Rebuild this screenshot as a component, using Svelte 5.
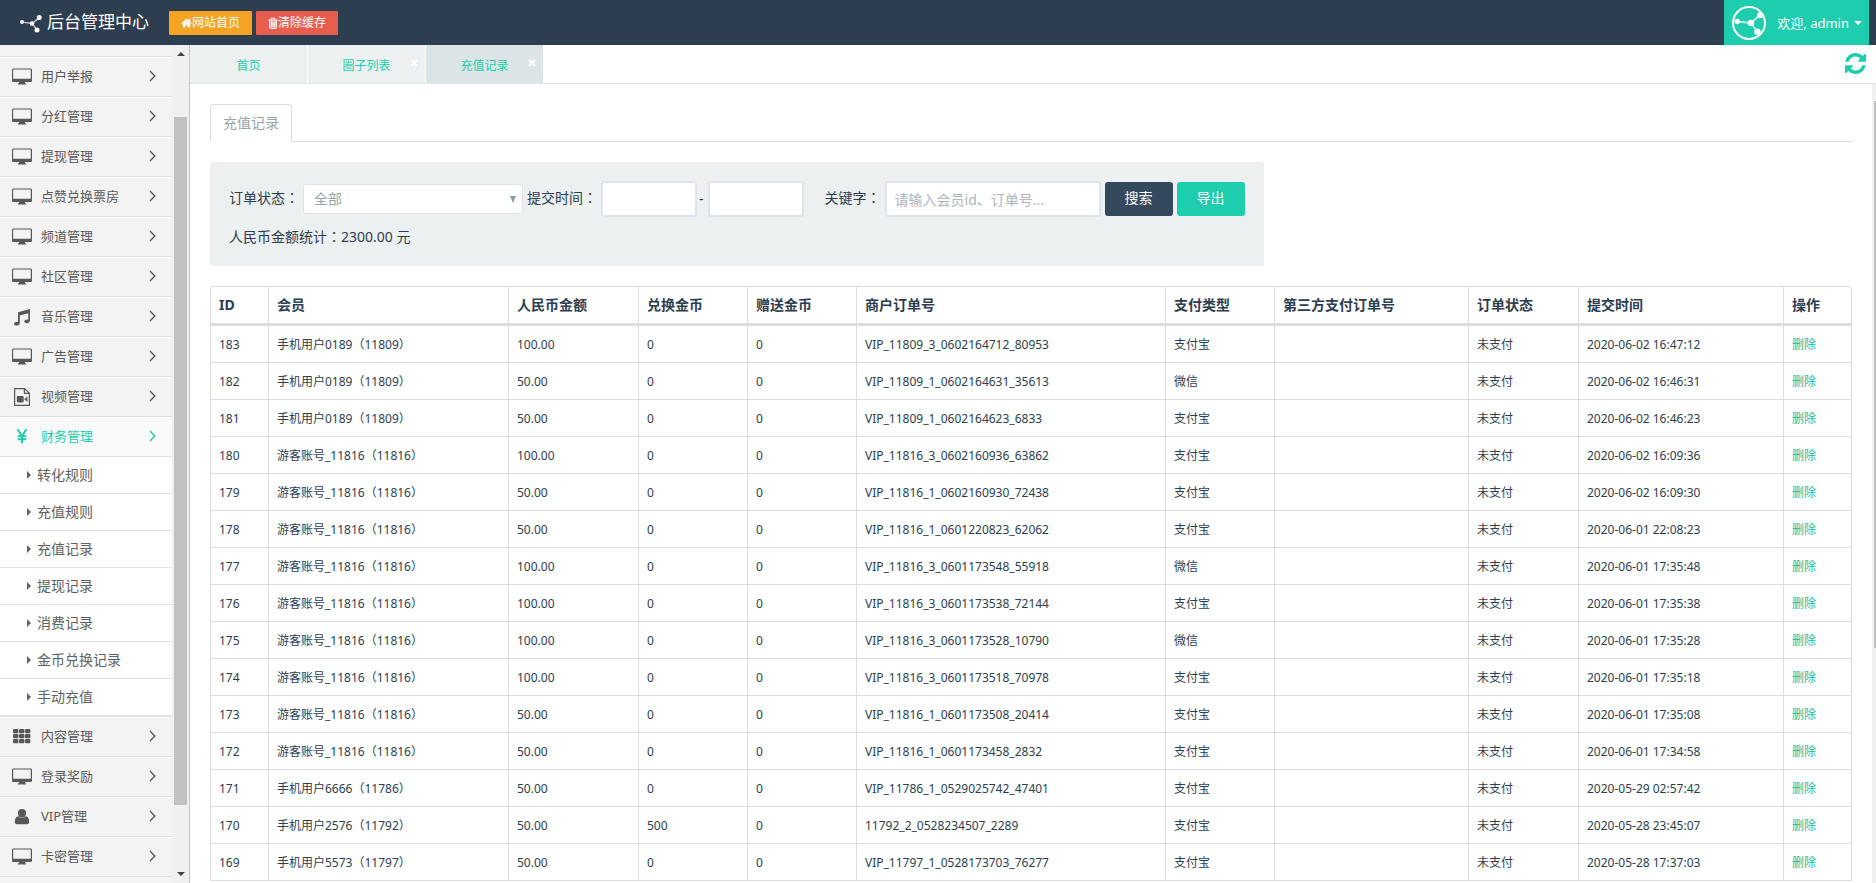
<script>
  const menuTop = [
    ['用户举报', 'desktop'],
    ['分红管理', 'desktop'],
    ['提现管理', 'desktop'],
    ['点赞兑换票房', 'desktop'],
    ['频道管理', 'desktop'],
    ['社区管理', 'desktop'],
    ['音乐管理', 'music'],
    ['广告管理', 'desktop'],
    ['视频管理', 'video'],
    ['财务管理', 'yen']
  ];
  const submenu = ['转化规则', '充值规则', '充值记录', '提现记录', '消费记录', '金币兑换记录', '手动充值'];
  const menuBottom = [
    ['内容管理', 'grid'],
    ['登录奖励', 'desktop'],
    ['VIP管理', 'user'],
    ['卡密管理', 'desktop']
  ];
  const columns = [
    ['ID', 58],
    ['会员', 240],
    ['人民币金额', 130],
    ['兑换金币', 109],
    ['赠送金币', 109],
    ['商户订单号', 309],
    ['支付类型', 109],
    ['第三方支付订单号', 194],
    ['订单状态', 110],
    ['提交时间', 205],
    ['操作', 68]
  ];
  const rows = [
    [183, '手机用户0189（11809）', '100.00', 0, 'VIP_11809_3_0602164712_80953', '支付宝', '2020-06-02 16:47:12'],
    [182, '手机用户0189（11809）', '50.00', 0, 'VIP_11809_1_0602164631_35613', '微信', '2020-06-02 16:46:31'],
    [181, '手机用户0189（11809）', '50.00', 0, 'VIP_11809_1_0602164623_6833', '支付宝', '2020-06-02 16:46:23'],
    [180, '游客账号_11816（11816）', '100.00', 0, 'VIP_11816_3_0602160936_63862', '支付宝', '2020-06-02 16:09:36'],
    [179, '游客账号_11816（11816）', '50.00', 0, 'VIP_11816_1_0602160930_72438', '支付宝', '2020-06-02 16:09:30'],
    [178, '游客账号_11816（11816）', '50.00', 0, 'VIP_11816_1_0601220823_62062', '支付宝', '2020-06-01 22:08:23'],
    [177, '游客账号_11816（11816）', '100.00', 0, 'VIP_11816_3_0601173548_55918', '微信', '2020-06-01 17:35:48'],
    [176, '游客账号_11816（11816）', '100.00', 0, 'VIP_11816_3_0601173538_72144', '支付宝', '2020-06-01 17:35:38'],
    [175, '游客账号_11816（11816）', '100.00', 0, 'VIP_11816_3_0601173528_10790', '微信', '2020-06-01 17:35:28'],
    [174, '游客账号_11816（11816）', '100.00', 0, 'VIP_11816_3_0601173518_70978', '支付宝', '2020-06-01 17:35:18'],
    [173, '游客账号_11816（11816）', '50.00', 0, 'VIP_11816_1_0601173508_20414', '支付宝', '2020-06-01 17:35:08'],
    [172, '游客账号_11816（11816）', '50.00', 0, 'VIP_11816_1_0601173458_2832', '支付宝', '2020-06-01 17:34:58'],
    [171, '手机用户6666（11786）', '50.00', 0, 'VIP_11786_1_0529025742_47401', '支付宝', '2020-05-29 02:57:42'],
    [170, '手机用户2576（11792）', '50.00', 500, '11792_2_0528234507_2289', '支付宝', '2020-05-28 23:45:07'],
    [169, '手机用户5573（11797）', '50.00', 0, 'VIP_11797_1_0528173703_76277', '支付宝', '2020-05-28 17:37:03']
  ];
</script>

{#snippet menuIcon(name)}
  <svg class="icon" viewBox="0 0 20 18" aria-hidden="true">
    {#if name === 'desktop'}
      <path fill="currentColor" fill-rule="evenodd" d="M1.300 .5h17.400q1.300 0 1.300 1.300v10.900q0 1.300-1.300 1.300H13v1.200h.8q.4 0 .4.500v.8H5.800v-.8q0-.5.4-.5H7V14H1.300Q0 14 0 12.700V1.800Q0 .5 1.300 .5zM1.200 1.600v9.100h17.600V1.600z" />
    {:else if name === 'music'}
      <path fill="currentColor" d="M6 4.200 18 1v11.600c0 1.700-1.500 2.600-3.200 2.600-1.500 0-2.500-.7-2.500-1.700 0-1.200 1.400-2.100 3-2.100.4 0 .8 0 1 .2V5.300L7.800 7.600v7.400c0 1.600-1.500 2.600-3.200 2.600-1.500 0-2.500-.7-2.500-1.700 0-1.200 1.400-2.100 2.900-2.100.4 0 .7 0 1 .2z" />
    {:else if name === 'video'}
      <path fill="none" stroke="currentColor" stroke-width="1.200" stroke-linejoin="round" d="M2.600 .6h10l4.800 4.600v12.200H2.600zM12.400 .8v4.600h4.800" />
      <path fill="currentColor" d="M5.900 8h4.700q1.100 0 1.100 1.100v4.200q0 1.100-1.100 1.100H5.900q-1.100 0-1.100-1.100V9.100Q4.800 8 5.900 8zM12.200 11.200 15.400 8.400v5.600z" />
    {:else if name === 'yen'}
      <path fill="none" stroke="currentColor" stroke-width="2" d="M5.600 1.200 10 8.200l4.400-7M10 8v7.200M5.800 8.300h8.400M5.800 11.200h8.400" />
    {:else if name === 'grid'}
      {#each [1, 6, 11] as y}
        {#each [1, 7, 13] as x}
          <rect {x} {y} width="5.400" height="4.200" rx="1" fill="currentColor" />
        {/each}
      {/each}
    {:else if name === 'user'}
      <path fill="currentColor" d="M10 1a4 4.200 0 1 1 0 8.400A4 4.200 0 0 1 10 1zM6.400 8.200c2 2.300 5.200 2.300 7.200 0 2.600.3 3.600 2.700 3.600 5.500 0 1.500-.8 2.500-2 2.500H4.800c-1.200 0-2-1-2-2.500 0-2.800 1-5.200 3.600-5.500z" />
    {/if}
  </svg>
{/snippet}

{#snippet menuItem(label, icon, active)}
  <a class="item" class:active href="#menu">
    {@render menuIcon(icon)}
    <span class="name">{label}</span>
    <svg class="chevron" viewBox="0 0 7 12" aria-hidden="true"><path d="M1 1l4.800 5L1 11" fill="none" stroke="currentColor" stroke-width="1.400" /></svg>
  </a>
{/snippet}

<div class="app">
  <header>
    <h1>
      <svg viewBox="0 0 22 18" aria-hidden="true">
        <path d="M2 7 12 8.700 19.200 2.700M12 8.700l5 6" fill="none" stroke="#fff" stroke-width="1.200" stroke-opacity=".85" />
        <circle cx="2" cy="7" r="2" fill="#fff" /><circle cx="12" cy="8.500" r="2.300" fill="#fff" />
        <circle cx="19.200" cy="2.500" r="2.500" fill="#fff" /><circle cx="17" cy="15" r="2.500" fill="#fff" />
      </svg>
      <span>后台管理中心</span>
    </h1>
    <a class="mini orange" href="#home">
      <svg viewBox="64 128 1664 1536" width="11" height="12" aria-hidden="true"><path fill="#fff" d="M1472 992v480q0 26-19 45t-45 19h-384v-384h-256v384h-384q-26 0-45-19t-19-45v-480q0-1 .5-3t.5-3l575-474 575 474q1 2 1 6zm223-69l-62 74q-8 9-21 11h-3q-13 0-21-7l-692-577-692 577q-12 8-24 7-13-2-21-11l-62-74q-8-10-7-23.500t11-21.500l719-599q32-26 76-26t76 26l244 204v-195q0-14 9-23t23-9h192q14 0 23 9t9 23v408l219 182q10 8 11 21.500t-7 23.500z" /></svg>网站首页
    </a>
    <button class="mini red" type="button">
      <svg viewBox="0 0 10 12" width="10" height="12" aria-hidden="true"><path fill="#fff" fill-opacity=".45" d="M1.500 3h7v8.500h-7z" /><path fill="none" stroke="#fff" d="M.2 3h9.600M3.200 2.800V1.200h3.600v1.600M1.500 3v7.500q0 1 1 1h5q1 0 1-1V3M3.500 5v4.500M5 5v4.500M6.500 5v4.500" /></svg>清除缓存
    </button>
    <button class="user" type="button">
      <svg class="avatar" viewBox="0 0 34 34" aria-hidden="true">
        <circle cx="17" cy="17" r="16" fill="none" stroke="#fff" stroke-width="2" />
        <path d="M5 15.500 19 17l9-8M19 17l6.500 9" fill="none" stroke="#fff" stroke-opacity=".7" stroke-width="1.800" />
        <circle cx="5.200" cy="15.500" r="2.700" fill="#fff" /><circle cx="19" cy="17" r="3.200" fill="#fff" />
        <circle cx="28" cy="9.300" r="3" fill="#fff" /><circle cx="25.500" cy="25.800" r="3.200" fill="#fff" />
      </svg>
      <span>欢迎, admin</span>
      <i class="caret"></i>
    </button>
  </header>

  <div class="body">
    <aside>
      <nav>
        <div class="stub"></div>
        {#each menuTop as [label, icon]}
          {@render menuItem(label, icon, icon === 'yen')}
        {/each}
        <div class="submenu">
          {#each submenu as label}
            <a href="#sub"><svg viewBox="0 0 4 8" width="4" height="8" aria-hidden="true"><path d="M0 0l4 4-4 4z" fill="currentColor" /></svg>{label}</a>
          {/each}
        </div>
        {#each menuBottom as [label, icon]}
          {@render menuItem(label, icon, false)}
        {/each}
      </nav>
      <div class="bar">
        <i class="up"></i>
        <div class="track"><div class="thumb"></div></div>
        <i class="down"></i>
      </div>
    </aside>

    <main>
      <div class="tabs">
        <a href="#t1">首页</a>
        {#each ['圈子列表', '充值记录'] as t, i}
          <a href="#t" class:current={i === 1}>{t}<svg class="close" viewBox="0 0 8 8" aria-hidden="true"><path d="M1 1l6 6M7 1l-6 6" stroke="#fff" stroke-width="2" /></svg></a>
        {/each}
        <button class="refresh" type="button" aria-label="刷新">
          <svg viewBox="128 128 1536 1536" aria-hidden="true"><path fill="currentColor" d="M1639 1056q0 5-1 7-64 268-268 434.500t-478 166.500q-146 0-282.500-55t-243.500-157l-129 129q-19 19-45 19t-45-19-19-45v-448q0-26 19-45t45-19h448q26 0 45 19t19 45-19 45l-137 137q71 66 161 102t187 36q134 0 250-65t186-179q11-17 53-117 8-23 30-23h192q13 0 22.500 9.500t9.500 22.500zm25-800v448q0 26-19 45t-45 19h-448q-26 0-45-19t-19-45 19-45l138-138q-148-137-349-137-134 0-250 65t-186 179q-11 17-53 117-8 23-30 23h-199q-13 0-22.500-9.500t-9.500-22.500v-7q65-268 270-434.500t480-166.500q146 0 284 55.500t245 156.500l130-129q19-19 45-19t45 19 19 45z" /></svg>
        </button>
      </div>

      <div class="frame">
        <div class="page">
          <div class="inner-tabs"><a href="#records">充值记录</a></div>

          <form class="well" onsubmit={(e) => e.preventDefault()}>
            <div class="fields">
              <label for="status">订单状态<span class="colon">：</span></label>
              <div class="pick">
                <select id="status"><option>全部</option></select>
                <svg viewBox="0 0 6 7" aria-hidden="true"><path d="M0 0h6L3 7z" fill="#8a9b9c" /></svg>
              </div>
              <label for="from">提交时间<span class="colon">：</span></label>
              <input id="from" class="date" type="text" />
              <span class="dash">-</span>
              <input class="date" type="text" aria-label="结束时间" />
              <label class="key" for="keyword">关键字<span class="colon">：</span></label>
              <input id="keyword" class="keyword" type="text" placeholder="请输入会员id、订单号..." />
              <button class="search" type="submit">搜索</button>
              <button class="export" type="button">导出</button>
            </div>
            <p>人民币金额统计<span class="colon">：</span>2300.00 元</p>
          </form>

          <table>
            <colgroup>
              {#each columns as [, w]}<col style="width: {w}px" />{/each}
            </colgroup>
            <thead>
              <tr>{#each columns as [label]}<th>{label}</th>{/each}</tr>
            </thead>
            <tbody>
              {#each rows as [id, member, amount, coins, order, pay, time]}
                <tr>
                  <td>{id}</td><td>{member}</td><td>{amount}</td><td>{coins}</td><td>0</td>
                  <td>{order}</td><td>{pay}</td><td></td><td>未支付</td><td>{time}</td>
                  <td><a href="#delete">删除</a></td>
                </tr>
              {/each}
            </tbody>
          </table>
        </div>
        <div class="bar page-bar"><div class="page-thumb"></div></div>
      </div>
    </main>
  </div>
</div>

<style>
  :global(body) { margin: 0; }
  .app {
    height: 100vh;
    display: flex;
    flex-direction: column;
    overflow: hidden;
    background: #fff;
    color: #2c3e50;
    font: 14px/20px "Noto Sans", "Noto Sans CJK SC", sans-serif;
  }
  .app * { box-sizing: border-box; }
  a { text-decoration: none; color: inherit; }
  button, input, select { font: inherit; margin: 0; }
  button { border: 0; cursor: pointer; }
  .colon { font-family: "Noto Sans CJK TC", sans-serif; line-height: 1; }

  header {
    flex: none;
    height: 45px;
    display: flex;
    align-items: center;
    gap: 4px;
    padding: 0 7px 0 20px;
    background: #2d3e50;
    color: #fff;
  }
  h1 {
    display: flex;
    align-items: center;
    gap: 5px;
    width: 145px;
    margin: 0;
    font-size: 17px;
    font-weight: 400;
    line-height: 24px;
    white-space: nowrap;
  }
  h1 svg { width: 22px; height: 18px; flex: none; margin-top: 2px; }
  h1 span { padding-bottom: 2px; }
  .mini {
    display: flex;
    align-items: center;
    height: 24px;
    padding: 0 12px;
    border-radius: 1px;
    font-size: 12px;
    color: #fff;
    white-space: nowrap;
  }
  .orange { background: #f5a325; }
  .red { background: #e95d4f; }
  .user {
    display: flex;
    align-items: center;
    height: 45px;
    margin-left: auto;
    padding: 0 7px 0 8px;
    background: #1ecdad;
    color: #fff;
    font-size: 13px;
    white-space: nowrap;
  }
  .avatar { width: 34px; height: 34px; margin-right: 11px; }
  .caret {
    margin-left: 5px;
    border: 4px solid transparent;
    border-top-color: #fff;
    border-bottom: 0;
  }

  .body { flex: 1; min-height: 0; display: flex; }
  aside {
    flex: none;
    width: 190px;
    display: flex;
    background: #f3f3f3;
    border-right: 1px solid #c6c6c6;
    overflow: hidden;
  }
  nav { flex: 1; color: #585858; }
  .stub { height: 12px; border-bottom: 1px solid #dfdfdf; }
  .item {
    display: flex;
    align-items: center;
    height: 40px;
    padding: 0 16px 2px 12px;
    border-top: 1px solid #fcfcfc;
    border-bottom: 1px solid #dfdfdf;
    background: #f3f3f3;
    font-size: 13px;
  }
  .item.active { color: #1ecdad; background: #fafafa; }
  .icon { width: 20px; height: 18px; margin: 2px 9px 0 0; }
  .name { flex: 1; }
  .chevron { width: 7px; height: 12px; }
  .submenu { background: #fff; border-bottom: 1px solid #dfdfdf; }
  .submenu a {
    display: flex;
    align-items: center;
    gap: 6px;
    height: 37px;
    padding-left: 27px;
    border-bottom: 1px solid #e2e2e2;
    color: #616161;
  }
  .bar {
    width: 17px;
    display: flex;
    flex-direction: column;
    align-items: center;
    padding: 7px 0;
    background: #f0f0f0;
  }
  .bar i { border: 4px solid transparent; }
  .bar .up { border-top: 0; border-bottom-color: #444; }
  .bar .down { border-bottom: 0; border-top-color: #444; }
  .track { flex: 1; padding: 61px 0 67px; }
  .thumb { width: 13px; height: 100%; background: #c1c1c1; }

  main { flex: 1; min-width: 0; display: flex; flex-direction: column; }
  .tabs {
    flex: none;
    display: flex;
    gap: 1px;
    height: 39px;
    border-bottom: 1px solid #e2e4e4;
    color: #1ecdad;
    font-size: 12px;
  }
  .tabs a {
    position: relative;
    width: 117px;
    padding-top: 11px;
    background: #ecf0f1;
    text-align: center;
  }
  .tabs a.current { background: #dbe4e6; }
  .close { position: absolute; top: 14px; right: 7px; width: 8px; height: 8px; }
  .refresh {
    margin-left: auto;
    margin-right: 10px;
    padding: 0;
    background: none;
    color: #1ecdad;
  }
  .refresh svg { display: block; width: 21px; height: 21px; margin-bottom: 2px; }

  .frame { flex: 1; min-height: 0; display: flex; overflow: hidden; }
  .page { flex: 1; min-width: 0; padding: 20px 20px 0; }
  .page-bar { width: 4px; padding: 17px 0 0 2px; }
  .page-thumb { width: 100%; height: 70%; background: #c1c1c1; }

  .inner-tabs { display: flex; border-bottom: 1px solid #ddd; margin-bottom: 20px; }
  .inner-tabs a {
    height: 38px;
    margin-bottom: -1px;
    padding: 8px 12px;
    border: 1px solid #ddd;
    border-bottom-color: #fff;
    border-radius: 4px 4px 0 0;
    background: #fff;
    color: #95a5a6;
  }

  .well {
    width: fit-content;
    height: 104px;
    margin: 0 0 20px;
    padding: 19px;
    border-radius: 3px;
    background: #ecf0f1;
  }
  .fields { display: flex; align-items: center; gap: 4px; white-space: nowrap; }
  label { padding-bottom: 2px; }
  .pick { position: relative; width: 220px; }
  select {
    display: block;
    width: 100%;
    height: 30px;
    padding: 0 20px 0 10px;
    border: 1px solid #dce4ec;
    border-radius: 3px;
    background: #fff;
    color: #95a5a6;
    appearance: none;
  }
  .pick svg { position: absolute; right: 7px; top: 12px; width: 6px; height: 7px; }
  .fields input {
    height: 36px;
    padding: 0 8px;
    border: 2px solid #dce4ec;
    border-radius: 3px;
    background: #fff;
    color: #2c3e50;
  }
  .fields .date { width: 96px; }
  .dash { margin-left: -2px; }
  .key { margin-left: 17px; }
  .fields .keyword { width: 216px; }
  input::placeholder { color: #acb6c0; opacity: 1; }
  .fields button { width: 68px; height: 34px; padding: 0 0 2px; border-radius: 3px; color: #fff; }
  .search { background: #34495e; }
  .export { background: #1ecdad; }
  p { margin: 10px 0 0; }

  table {
    width: 100%;
    table-layout: fixed;
    border: 1px solid #ddd;
    border-width: 1px 0 0 1px;
    border-radius: 4px 4px 0 0;
    border-collapse: separate;
    border-spacing: 0;
    text-align: left;
  }
  th, td {
    padding: 0 8px;
    border: 0 solid #ddd;
    border-width: 0 1px 1px 0;
    white-space: nowrap;
  }
  th { height: 39px; border-bottom-width: 3px; font-weight: 700; }
  th:last-child { border-top-right-radius: 4px; }
  td { height: 37px; padding-top: 2px; font-size: 12px; }
  td a { color: #18bc9c; }
</style>
